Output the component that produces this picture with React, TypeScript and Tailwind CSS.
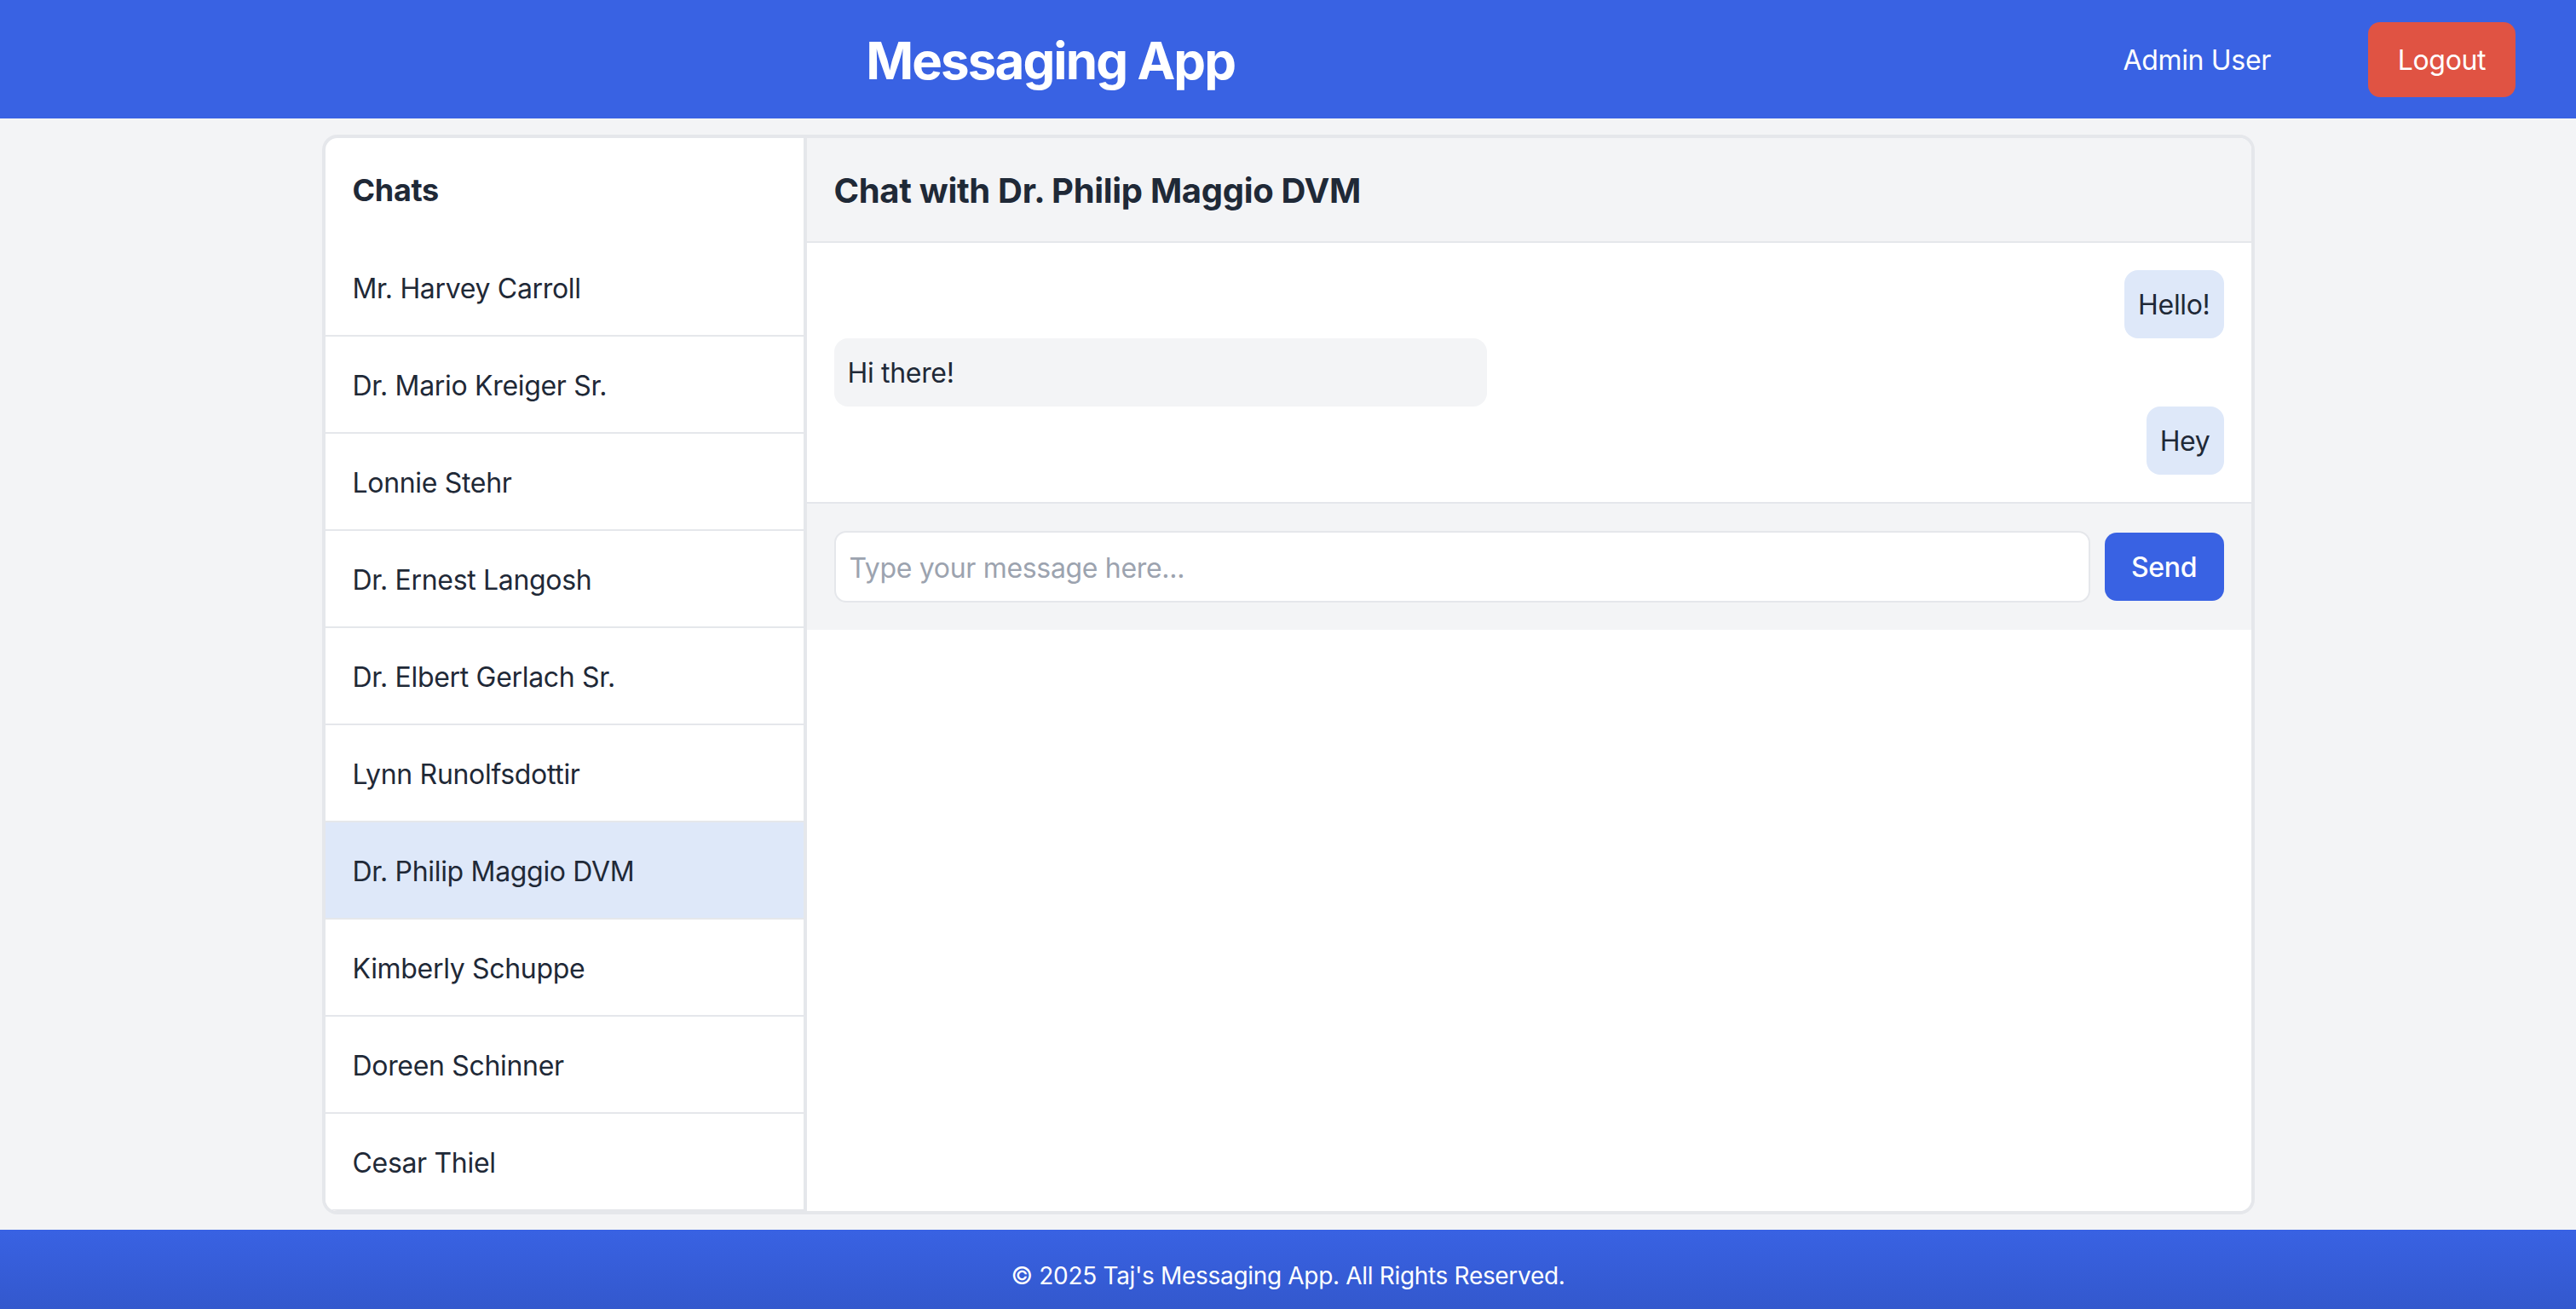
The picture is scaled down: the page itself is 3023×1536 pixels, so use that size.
const chats = [
	"Mr. Harvey Carroll",
	"Dr. Mario Kreiger Sr.",
	"Lonnie Stehr",
	"Dr. Ernest Langosh",
	"Dr. Elbert Gerlach Sr.",
	"Lynn Runolfsdottir",
	"Dr. Philip Maggio DVM",
	"Kimberly Schuppe",
	"Doreen Schinner",
	"Cesar Thiel",
];

const activeChat = "Dr. Philip Maggio DVM";

type Message = { text: string; mine: boolean };

const messages: Message[] = [
	{ text: "Hello!", mine: true },
	{ text: "Hi there!", mine: false },
	{ text: "Hey", mine: true },
];

export default function App() {
	return (
		<div className="min-h-screen bg-[#f3f4f6] font-['Inter','Noto_Sans',sans-serif] tracking-[-0.02em] text-[#1f2937]">
			<header className="h-[139px] bg-[#3962e3] flex items-center pr-[71px] text-white">
				<h1 className="flex-1 text-center text-[60px] font-bold leading-none tracking-[-0.032em] pt-[2px]">
					Messaging App
				</h1>
				<span className="ml-[26px] mr-[114px] text-[32px] pt-[2px]">Admin User</span>
				<button className="w-[173px] h-[88px] rounded-[14px] bg-[#e05343] text-[32px] pt-[2px]">
					Logout
				</button>
			</header>

			<main className="pt-[19px]">
				<div className="mx-auto w-[2268px] flex bg-white border-4 border-[#e5e7eb] rounded-[18px] overflow-hidden">
					<aside className="w-[565px] shrink-0 border-r-4 border-[#e5e7eb]">
						<div className="h-[119px] px-8 pt-[3px] flex items-center">
							<h2 className="text-[36px] font-bold">Chats</h2>
						</div>
						<ul>
							{chats.map((name) => (
								<li
									key={name}
									className={`h-[114px] px-8 pt-[4px] flex items-center border-b-2 border-[#e5e7eb] text-[32px] ${
										name === activeChat ? "bg-[#dee8f9]" : "bg-white"
									}`}
								>
									{name}
								</li>
							))}
						</ul>
					</aside>

					<section className="flex-1 flex flex-col">
						<div className="h-[123px] px-8 pt-[2px] flex items-center bg-[#f3f4f6] border-b-2 border-[#e5e7eb]">
							<h2 className="text-[40px] font-bold">Chat with {activeChat}</h2>
						</div>

						<div className="p-8 flex flex-col border-b-2 border-[#e5e7eb]">
							{messages.map((m, i) =>
								m.mine ? (
									<div
										key={i}
										className="self-end h-[80px] px-4 pt-[2px] flex items-center rounded-[16px] bg-[#dee8f9] text-[32px]"
									>
										{m.text}
									</div>
								) : (
									<div
										key={i}
										className="w-[766px] h-[80px] px-4 pt-[2px] flex items-center rounded-[16px] bg-[#f3f4f6] text-[32px]"
									>
										{m.text}
									</div>
								),
							)}
						</div>

						<div className="p-8 flex items-center bg-[#f3f4f6]">
							<input
								type="text"
								placeholder="Type your message here..."
								className="flex-1 h-[84px] px-4 pt-[2px] bg-white border-2 border-[#e5e7eb] rounded-[14px] text-[32px] placeholder:text-[#9ca3af] outline-none"
							/>
							<button className="ml-[17px] w-[140px] h-[80px] rounded-[14px] bg-[#3962e3] text-white text-[32px] font-medium pt-[2px]">
								Send
							</button>
						</div>

						<div className="flex-1 bg-white" />
					</section>
				</div>
			</main>

			<footer className="mt-[18px] h-[93px] pt-[34px] bg-gradient-to-b from-[#3962e3] to-[#3358cd] text-center text-white text-[28px] leading-[40px]">
				© 2025 Taj's Messaging App. All Rights Reserved.
			</footer>
		</div>
	);
}
